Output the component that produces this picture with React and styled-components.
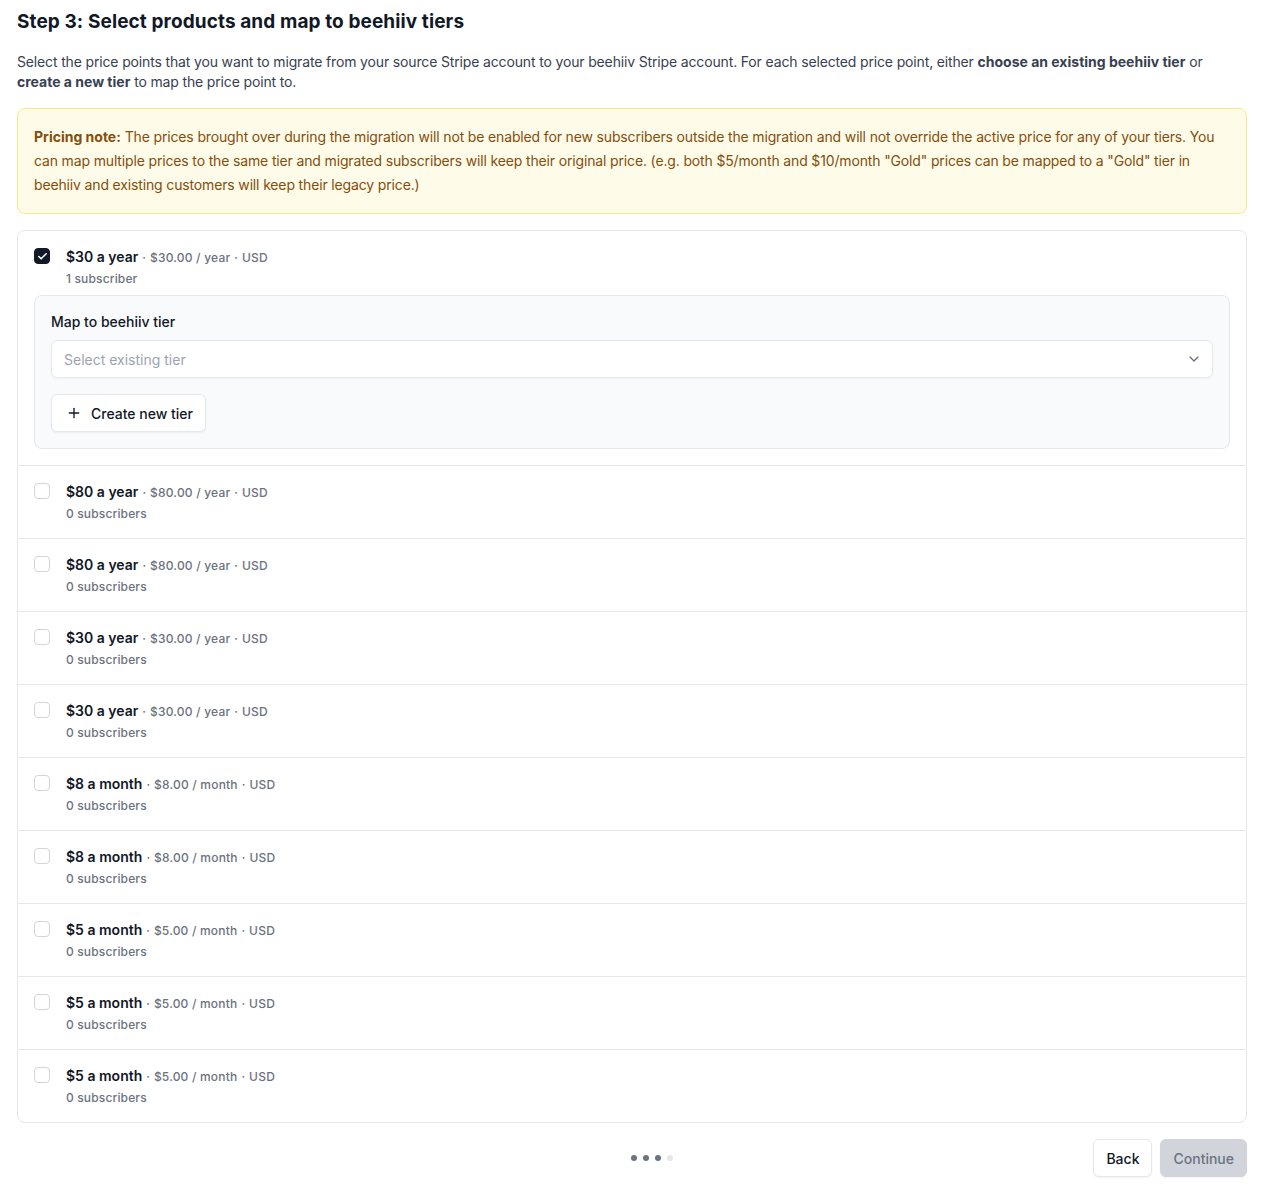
import React from 'react';
import styled, { createGlobalStyle } from 'styled-components';
import { Check, ChevronDown, Plus } from 'lucide-react';

const GlobalStyle = createGlobalStyle`
  * { box-sizing: border-box; }
  body {
    margin: 0;
    background: #ffffff;
    font-family: Inter, 'Noto Sans', sans-serif;
    color: #111827;
  }
`;

const prices = [
  { name: '$30 a year', amount: '$30.00', interval: 'year', subs: '1 subscriber', checked: true },
  { name: '$80 a year', amount: '$80.00', interval: 'year', subs: '0 subscribers' },
  { name: '$80 a year', amount: '$80.00', interval: 'year', subs: '0 subscribers' },
  { name: '$30 a year', amount: '$30.00', interval: 'year', subs: '0 subscribers' },
  { name: '$30 a year', amount: '$30.00', interval: 'year', subs: '0 subscribers' },
  { name: '$8 a month', amount: '$8.00', interval: 'month', subs: '0 subscribers' },
  { name: '$8 a month', amount: '$8.00', interval: 'month', subs: '0 subscribers' },
  { name: '$5 a month', amount: '$5.00', interval: 'month', subs: '0 subscribers' },
  { name: '$5 a month', amount: '$5.00', interval: 'month', subs: '0 subscribers' },
  { name: '$5 a month', amount: '$5.00', interval: 'month', subs: '0 subscribers' },
];

function App() {
  return (
    <>
      <GlobalStyle />
      <Page>
        <Title>Step 3: Select products and map to beehiiv tiers</Title>
        <Description>
          Select the price points that you want to migrate from your source Stripe account to your beehiiv Stripe
          account. For each selected price point, either <strong>choose an existing beehiiv tier</strong> or{' '}
          <strong>create a new tier</strong> to map the price point to.
        </Description>
        <Note>
          <strong>Pricing note:</strong> The prices brought over during the migration will not be enabled for new
          subscribers outside the migration and will not override the active price for any of your tiers. You can map
          multiple prices to the same tier and migrated subscribers will keep their original price. (e.g. both
          $5/month and $10/month "Gold" prices can be mapped to a "Gold" tier in beehiiv and existing customers will
          keep their legacy price.)
        </Note>
        <List>
          {prices.map((p, i) => (
            <Row key={i}>
              <RowHead>
                <Checkbox $checked={p.checked}>
                  {p.checked && <Check size={11} strokeWidth={3.5} color="#ffffff" />}
                </Checkbox>
                <Info>
                  <PriceLine>
                    <PriceName>{p.name}</PriceName>
                    <Sep>·</Sep>
                    <Meta>{p.amount} / {p.interval}</Meta>
                    <Sep>·</Sep>
                    <Meta>USD</Meta>
                  </PriceLine>
                  <Subs>{p.subs}</Subs>
                </Info>
              </RowHead>
              {p.checked && (
                <MapPanel>
                  <Label>Map to beehiiv tier</Label>
                  <Select>
                    <span>Select existing tier</span>
                    <ChevronDown size={16} color="#6b7280" strokeWidth={2} />
                  </Select>
                  <div>
                    <SecondaryButton>
                      <Plus size={16} strokeWidth={2} />
                      Create new tier
                    </SecondaryButton>
                  </div>
                </MapPanel>
              )}
            </Row>
          ))}
        </List>
        <Footer>
          <Dots>
            <Dot />
            <Dot />
            <Dot />
            <Dot $muted />
          </Dots>
          <Actions>
            <Button>Back</Button>
            <Button $disabled>Continue</Button>
          </Actions>
        </Footer>
      </Page>
    </>
  );
}

export default App;

const Page = styled.div`
  padding: 8px 14px 16px 17px;
  display: flex;
  flex-direction: column;
`;

const Title = styled.h2`
  margin: 0;
  font-size: 19px;
  line-height: 28px;
  font-weight: 700;
  color: #111827;
  letter-spacing: 0.1px;
`;

const Description = styled.p`
  margin: 16px 0 0;
  font-size: 14px;
  line-height: 20px;
  color: #374151;
  letter-spacing: -0.15px;
  strong {
    font-weight: 700;
    color: #374151;
    letter-spacing: 0;
  }
`;

const Note = styled.div`
  margin-top: 16px;
  padding: 16px;
  background: #fefce8;
  border: 1px solid #fde68a;
  border-radius: 8px;
  font-size: 14px;
  line-height: 24px;
  color: #854d0e;
  letter-spacing: -0.15px;
  strong {
    font-weight: 700;
    letter-spacing: 0;
  }
`;

const List = styled.div`
  margin-top: 16px;
  border: 1px solid #e5e7eb;
  border-radius: 8px;
  background: #ffffff;
`;

const Row = styled.div`
  padding: 16px;
  display: flex;
  flex-direction: column;
  gap: 8px;
  & + & {
    border-top: 1px solid #e5e7eb;
  }
`;

const RowHead = styled.div`
  display: flex;
  align-items: flex-start;
  gap: 16px;
`;

const Checkbox = styled.span`
  width: 16px;
  height: 16px;
  margin-top: 1px;
  border-radius: 4px;
  display: flex;
  align-items: center;
  justify-content: center;
  flex-shrink: 0;
  background: ${(p) => (p.$checked ? '#111827' : '#ffffff')};
  border: 1px solid ${(p) => (p.$checked ? '#111827' : '#d1d5db')};
`;

const Info = styled.div`
  display: flex;
  flex-direction: column;
  gap: 3px;
`;

const PriceLine = styled.div`
  display: flex;
  align-items: baseline;
  white-space: pre;
`;

const PriceName = styled.span`
  font-size: 14px;
  line-height: 20px;
  font-weight: 600;
  color: #111827;
`;

const Meta = styled.span`
  font-size: 12px;
  line-height: 18px;
  font-weight: 500;
  color: #6b7280;
  letter-spacing: 0.2px;
`;

const Sep = styled(Meta)`
  padding: 0 4px;
  letter-spacing: 0;
`;

const Subs = styled.span`
  font-size: 12px;
  line-height: 17px;
  font-weight: 500;
  color: #6b7280;
  letter-spacing: 0.15px;
`;

const MapPanel = styled.div`
  padding: 16px;
  background: #f9fafb;
  border: 1px solid #e5e7eb;
  border-radius: 8px;
  display: flex;
  flex-direction: column;
  gap: 16px;
`;

const Label = styled.div`
  font-size: 14px;
  line-height: 20px;
  font-weight: 500;
  color: #111827;
  margin-bottom: -8px;
`;

const Select = styled.div`
  height: 38px;
  padding: 0 10px 0 12px;
  background: #ffffff;
  border: 1px solid #e5e7eb;
  border-radius: 6px;
  box-shadow: 0 1px 2px rgba(0, 0, 0, 0.04);
  display: flex;
  align-items: center;
  justify-content: space-between;
  font-size: 14px;
  color: #9ca3af;
`;

const SecondaryButton = styled.button`
  height: 38px;
  padding: 0 12px 0 14px;
  background: #ffffff;
  border: 1px solid #e5e7eb;
  border-radius: 6px;
  box-shadow: 0 1px 2px rgba(0, 0, 0, 0.05);
  display: inline-flex;
  align-items: center;
  gap: 9px;
  font-family: inherit;
  font-size: 14px;
  font-weight: 500;
  color: #111827;
`;

const Footer = styled.div`
  margin-top: 16px;
  padding-left: calc(50% - 1px);
  display: flex;
  justify-content: space-between;
  align-items: center;
`;

const Dots = styled.div`
  display: flex;
  gap: 6px;
`;

const Dot = styled.span`
  width: 6px;
  height: 6px;
  border-radius: 50%;
  background: ${(p) => (p.$muted ? '#e5e7eb' : '#6b7280')};
`;

const Actions = styled.div`
  display: flex;
  justify-content: flex-end;
  gap: 8px;
`;

const Button = styled.button`
  height: 38px;
  padding: 0 12px;
  border-radius: 6px;
  font-family: inherit;
  font-size: 14px;
  font-weight: 500;
  border: 1px solid ${(p) => (p.$disabled ? '#d1d5db' : '#e5e7eb')};
  background: ${(p) => (p.$disabled ? '#d1d5db' : '#ffffff')};
  color: ${(p) => (p.$disabled ? '#6b7280' : '#111827')};
  box-shadow: 0 1px 2px rgba(0, 0, 0, 0.05);
`;
